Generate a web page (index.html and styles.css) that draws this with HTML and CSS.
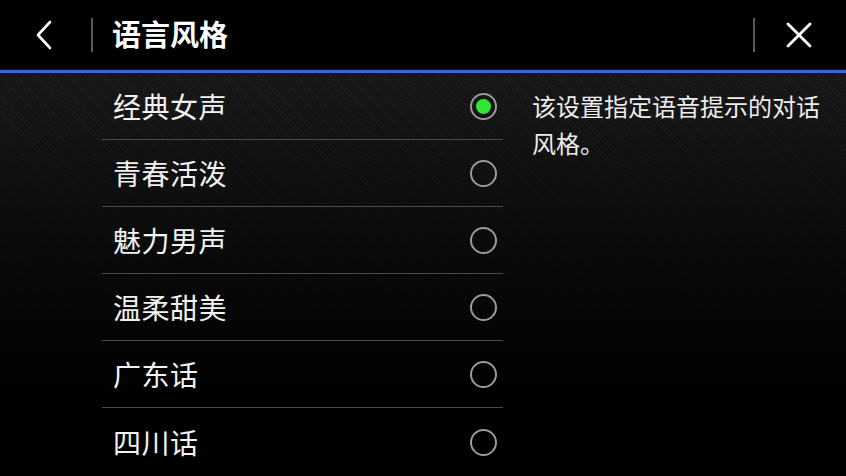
FILE: index.html
```html
<!DOCTYPE html>
<html>
<head>
    <meta charset="utf-8" />
    <meta name="viewport" content="width=device-width, initial-scale=1.0">
    <title>语言风格</title>
    <link rel="stylesheet" href="styles.css">
</head>
<body>
    <div class="header">
        <button class="nav-btn back-btn">
            <svg width="18" height="30" viewBox="0 0 18 30">
                <polyline points="15,2 3,15 15,28" fill="none" stroke="#fff" stroke-width="2.6" stroke-linecap="round" stroke-linejoin="round" />
            </svg>
        </button>
        <div class="divider"></div>
        <h1 class="title">语言风格</h1>
        <div class="spacer"></div>
        <div class="divider"></div>
        <button class="nav-btn close-btn">
            <svg width="26" height="26" viewBox="0 0 26 26">
                <line x1="2" y1="2" x2="24" y2="24" stroke="#fff" stroke-width="2.8" stroke-linecap="round" />
                <line x1="24" y1="2" x2="2" y2="24" stroke="#fff" stroke-width="2.8" stroke-linecap="round" />
            </svg>
        </button>
    </div>
    <div class="content">
        <div class="list">
            <div class="item"><span class="label">经典女声</span><span class="radio checked"></span></div>
            <div class="item"><span class="label">青春活泼</span><span class="radio"></span></div>
            <div class="item"><span class="label">魅力男声</span><span class="radio"></span></div>
            <div class="item"><span class="label">温柔甜美</span><span class="radio"></span></div>
            <div class="item"><span class="label">广东话</span><span class="radio"></span></div>
            <div class="item"><span class="label">四川话</span><span class="radio"></span></div>
        </div>
        <p class="desc">该设置指定语音提示的对话风格。</p>
    </div>
</body>
</html>
```

FILE: styles.css
```css
body {
    margin: 0;
    padding: 0;
    width: 846px;
    height: 476px;
    overflow: hidden;
    background-color: #000;
    color: #fff;
    font-family: "Noto Sans CJK SC", "Noto Sans", sans-serif;
}

.header {
    display: flex;
    align-items: center;
    height: 69px;
    background-color: #000;
    border-bottom: 1px solid #1a1030;
}

.nav-btn {
    width: 91px;
    height: 69px;
    padding: 0;
    border: none;
    background: none;
    display: flex;
    align-items: center;
    justify-content: center;
}

.back-btn {
    padding-right: 3px;
}

.close-btn {
    padding-right: 3px;
}

.divider {
    width: 2px;
    height: 34px;
    background-color: #5a5a5a;
}

.title {
    margin: 0 0 0 19px;
    font-size: 29px;
    font-weight: bold;
    line-height: 1;
    padding-bottom: 2px;
}

.spacer {
    flex: 1;
}

.content {
    display: flex;
    height: 403px;
    border-top: 3px solid #3468dc;
    box-shadow: inset 0 3px 2px -1px #0d1540;
    background-image:
        linear-gradient(to bottom, rgba(0, 0, 0, 0) 0, rgba(0, 0, 0, 0.6) 45%, #000 82%),
        repeating-linear-gradient(45deg, #1d1d1d 0, #1d1d1d 1px, #161616 1px, #161616 3px),
        repeating-linear-gradient(-45deg, rgba(255, 255, 255, 0.02) 0, rgba(255, 255, 255, 0.02) 1px, transparent 1px, transparent 3px);
}

.list {
    width: 401px;
    margin-left: 102px;
}

.item {
    display: flex;
    align-items: center;
    height: 66px;
    padding: 0 6px 0 11px;
    border-bottom: 1px solid #4a4a4a;
}

.item:last-child {
    border-bottom: none;
    height: 68px;
}

.label {
    flex: 1;
    font-size: 28px;
    letter-spacing: 0.5px;
    color: #f2f2f2;
}

.radio {
    width: 23px;
    height: 23px;
    border: 2px solid #9a9a9a;
    border-radius: 50%;
    display: flex;
    align-items: center;
    justify-content: center;
}

.radio.checked::after {
    content: "";
    width: 15px;
    height: 15px;
    border-radius: 50%;
    background-color: #33e636;
}

.desc {
    width: 290px;
    margin: 14px 0 0 29px;
    font-size: 24px;
    line-height: 37px;
    color: #ededed;
}
```
